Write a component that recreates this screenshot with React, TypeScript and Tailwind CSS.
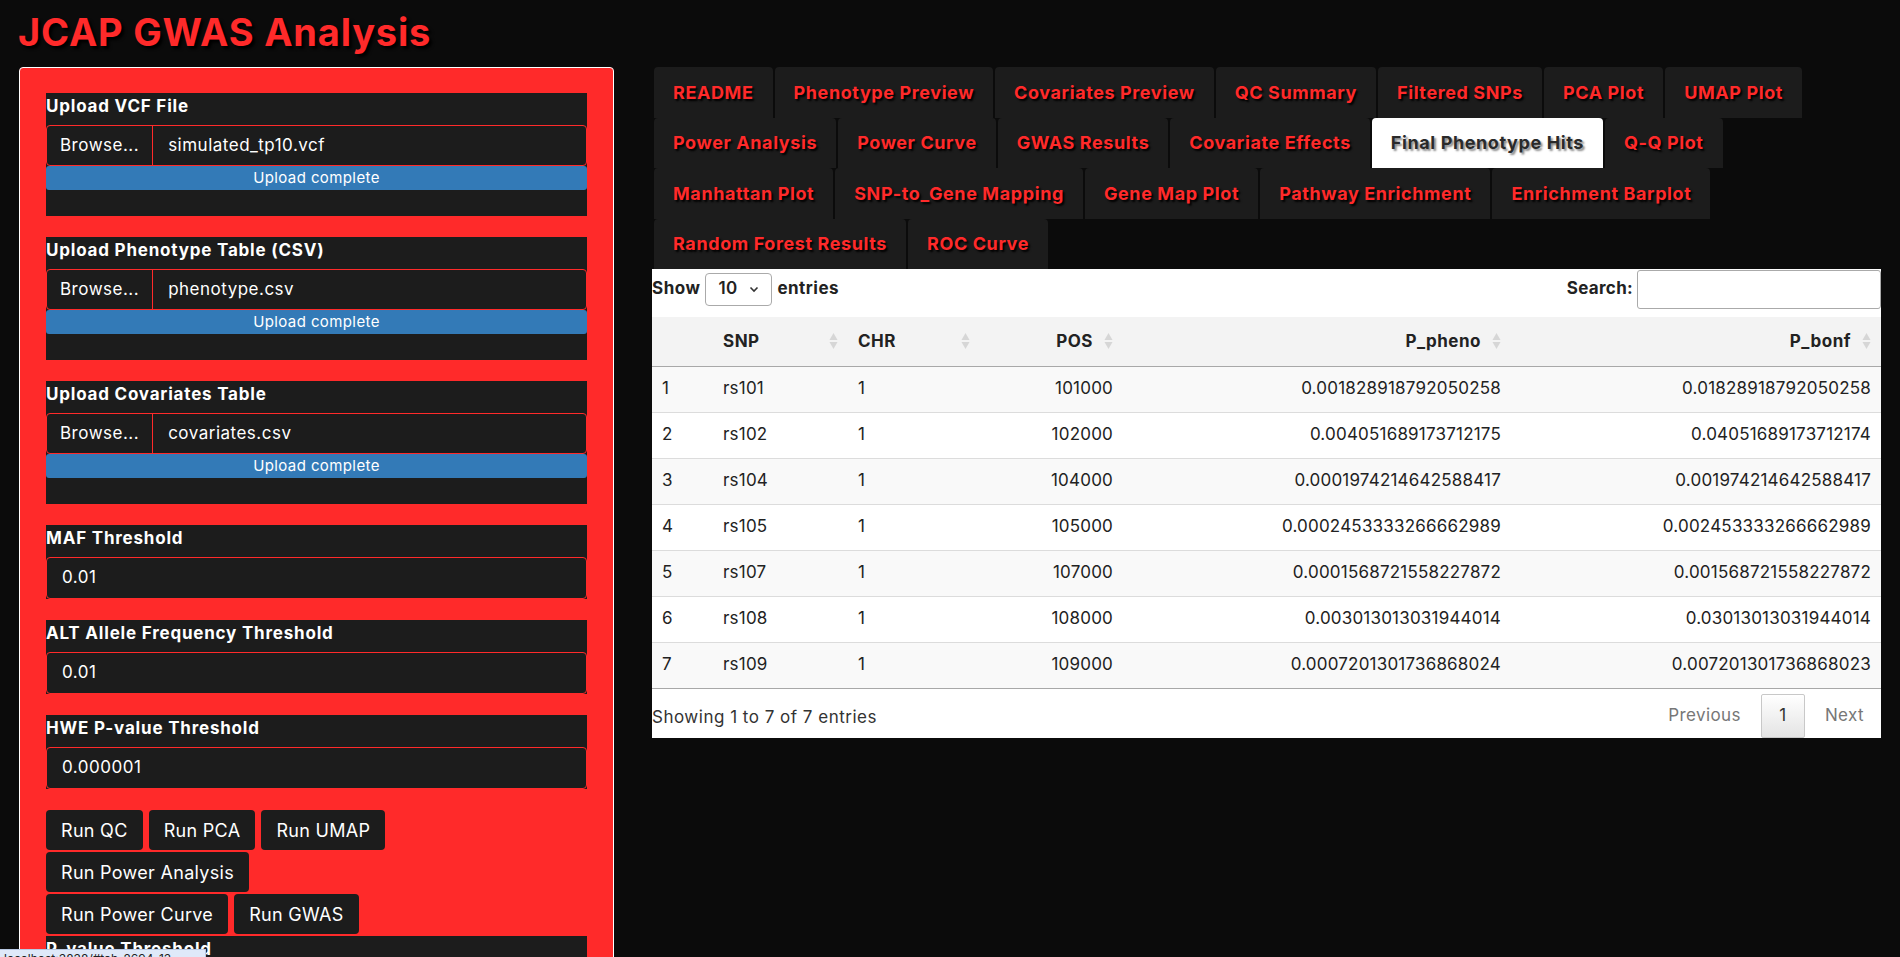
import React from "react";

const tabRows: string[][] = [
  ["README", "Phenotype Preview", "Covariates Preview", "QC Summary", "Filtered SNPs", "PCA Plot", "UMAP Plot"],
  ["Power Analysis", "Power Curve", "GWAS Results", "Covariate Effects", "Final Phenotype Hits", "Q-Q Plot"],
  ["Manhattan Plot", "SNP-to_Gene Mapping", "Gene Map Plot", "Pathway Enrichment", "Enrichment Barplot"],
  ["Random Forest Results", "ROC Curve"],
];

const ACTIVE = "Final Phenotype Hits";

const hits = [
  ["1", "rs101", "1", "101000", "0.001828918792050258", "0.01828918792050258"],
  ["2", "rs102", "1", "102000", "0.004051689173712175", "0.04051689173712174"],
  ["3", "rs104", "1", "104000", "0.0001974214642588417", "0.001974214642588417"],
  ["4", "rs105", "1", "105000", "0.0002453333266662989", "0.002453333266662989"],
  ["5", "rs107", "1", "107000", "0.0001568721558227872", "0.001568721558227872"],
  ["6", "rs108", "1", "108000", "0.003013013031944014", "0.03013013031944014"],
  ["7", "rs109", "1", "109000", "0.0007201301736868024", "0.007201301736868023"],
];

// Shiny-style file upload block
function FileInput({ label, file }: { label: string; file: string }) {
  return (
    <div className="bg-[#1c1c1c] pb-[26px] mb-[21px]">
      <div className="h-[32px] pt-[2px] leading-[22px] text-[17px] tracking-[0.8px] font-bold text-white">{label}</div>
      <div className="flex h-[41px] border border-[#ff2a2a] rounded-[4px] text-[17px] tracking-[0.5px] text-white">
        <div className="flex items-center px-[13px] border-r border-[#ff2a2a]">Browse...</div>
        <div className="flex items-center px-[15px]">{file}</div>
      </div>
      <div className="h-[24px] bg-[#337ab7] rounded-[3px] text-center text-[15px] tracking-[0.4px] leading-[24px] text-white">
        Upload complete
      </div>
    </div>
  );
}

function NumInput({ label, value }: { label: string; value: string }) {
  return (
    <div className="bg-[#1c1c1c] mb-[21px]">
      <div className="h-[32px] pt-[2px] leading-[22px] text-[17px] tracking-[0.8px] font-bold text-white">{label}</div>
      <div className="flex items-center h-[42px] px-[15px] border border-[#ff2a2a] rounded-[4px] text-[17px] tracking-[0.5px] text-white">
        {value}
      </div>
    </div>
  );
}

function RunButton({ children }: { children: React.ReactNode }) {
  return (
    <div className="h-[40px] px-[15px] flex items-center bg-[#1c1c1c] rounded-[4px] text-[18px] tracking-[0.3px] text-white">
      {children}
    </div>
  );
}

function SortIcon() {
  return (
    <svg width="9" height="18" viewBox="0 0 9 18" className="absolute right-[10px] top-1/2 -translate-y-1/2">
      <polygon points="4.5,1 8.5,8 0.5,8" fill="#d6d6d6" />
      <polygon points="0.5,10 8.5,10 4.5,17" fill="#d6d6d6" />
    </svg>
  );
}

function Sidebar() {
  return (
    <div className="w-[595px] shrink-0 bg-[#ff2a2a] border border-white rounded-[4px] px-[26px] pt-[25px] pb-[40px]">
      <FileInput label="Upload VCF File" file="simulated_tp10.vcf" />
      <FileInput label="Upload Phenotype Table (CSV)" file="phenotype.csv" />
      <FileInput label="Upload Covariates Table" file="covariates.csv" />
      <NumInput label="MAF Threshold" value="0.01" />
      <NumInput label="ALT Allele Frequency Threshold" value="0.01" />
      <NumInput label="HWE P-value Threshold" value="0.000001" />
      <div className="flex flex-col gap-[2px]">
        <div className="flex gap-[6px]">
          <RunButton>Run QC</RunButton>
          <RunButton>Run PCA</RunButton>
          <RunButton>Run UMAP</RunButton>
        </div>
        <div className="flex gap-[6px]">
          <RunButton>Run Power Analysis</RunButton>
        </div>
        <div className="flex gap-[6px]">
          <RunButton>Run Power Curve</RunButton>
          <RunButton>Run GWAS</RunButton>
        </div>
      </div>
      <div className="mt-[2px]">
        <NumInput label="P-value Threshold" value="0.00000005" />
      </div>
    </div>
  );
}

function Tabs() {
  return (
    <div className="flex flex-col pl-[2px]">
      {tabRows.map((row, i) => (
        <div key={i} className="flex gap-[2px] h-[50.5px]">
          {row.map((t) => {
            const active = t === ACTIVE;
            return (
              <div
                key={t}
                className={
                  active
                    ? "flex items-center px-[19px] rounded-t-[4px] bg-white text-[18px] tracking-[0.6px] font-bold text-[#2a2a2a] [text-shadow:2px_2px_2px_#8a8a8a]"
                    : "flex items-center px-[19px] rounded-t-[4px] bg-[#1c1c1c] text-[18px] tracking-[0.6px] font-bold text-[#ff2a2a] [text-shadow:2px_2px_2px_#000]"
                }
              >
                {t}
              </div>
            );
          })}
        </div>
      ))}
    </div>
  );
}

function HitsTable() {
  const heads = [
    { t: "", w: "w-[61px]", right: false, sort: false },
    { t: "SNP", w: "w-[135px]", right: false, sort: true },
    { t: "CHR", w: "w-[132px]", right: false, sort: true },
    { t: "POS", w: "w-[143px]", right: true, sort: true },
    { t: "P_pheno", w: "w-[388px]", right: true, sort: true },
    { t: "P_bonf", w: "w-[370px]", right: true, sort: true },
  ];
  return (
    <div className="bg-white text-[#222]">
      <div className="flex items-center justify-between h-[40px]">
        <div className="flex items-center gap-[5px] text-[17px] tracking-[0.5px] font-bold">
          <span>Show</span>
          <div className="flex items-center justify-between w-[67px] h-[33px] px-[12px] border border-[#aaa] rounded-[4px] font-semibold">
            <span>10</span>
            <svg width="10" height="7" viewBox="0 0 10 7">
              <path d="M1.5 1.5 L5 5 L8.5 1.5" fill="none" stroke="#333" strokeWidth="1.6" />
            </svg>
          </div>
          <span>entries</span>
        </div>
        <div className="flex items-center gap-[4px] text-[17px] tracking-[0.3px] font-bold">
          <span>Search:</span>
          <div className="w-[244px] h-[39px] border border-[#aaa] rounded-[3px]" />
        </div>
      </div>
      <table className="w-full border-collapse table-fixed mt-[8px] text-[17px] tracking-[0.2px]">
        <thead>
          <tr className="h-[49px] bg-[#f3f3f3] border-b border-[#a8a8a8]">
            {heads.map((h, i) => (
              <th
                key={i}
                className={`relative ${h.w} pl-[10px] pr-[30px] font-bold tracking-[0.5px] ${h.right ? "text-right" : "text-left"}`}
              >
                {h.t}
                {h.sort && <SortIcon />}
              </th>
            ))}
          </tr>
        </thead>
        <tbody>
          {hits.map((r, i) => (
            <tr key={i} className={`h-[46px] border-b ${i === hits.length - 1 ? "border-[#a8a8a8]" : "border-[#dcdcdc]"} ${i % 2 === 0 ? "bg-[#f9f9f9]" : "bg-white"}`}>
              {r.map((c, j) => (
                <td key={j} className={`px-[10px] ${j >= 3 ? "text-right" : "text-left"}`}>
                  {c}
                </td>
              ))}
            </tr>
          ))}
        </tbody>
      </table>
      <div className="flex items-start justify-between h-[49px]">
        <div className="pt-[16px] text-[17px] tracking-[0.5px] text-[#333]">Showing 1 to 7 of 7 entries</div>
        <div className="flex items-center pt-[5px] pr-[17px] text-[17px] tracking-[0.4px] text-[#777]">
          <span className="px-[12px]">Previous</span>
          <span className="mx-[8px] w-[44px] h-[44px] flex items-center justify-center border border-[#c8c8c8] rounded-[2px] text-[#333] bg-gradient-to-b from-white to-[#e4e4e4]">
            1
          </span>
          <span className="pl-[12px]">Next</span>
        </div>
      </div>
    </div>
  );
}

export default function App() {
  return (
    <div className="h-screen overflow-hidden bg-[#0b0b0b] font-['Inter','Liberation_Sans',sans-serif]">
      <h2 className="pl-[18px] pt-[10px] h-[67px] text-[38px] tracking-[0.8px] leading-[44px] font-bold text-[#ff2a2a] [text-shadow:3px_3px_3px_#000]">
        JCAP GWAS Analysis
      </h2>
      <div className="flex pl-[19px] pr-[19px] gap-[38px]">
        <Sidebar />
        <div className="flex-1 min-w-0">
          <Tabs />
          <HitsTable />
        </div>
      </div>
      <div className="fixed left-0 bottom-0 w-[206px] h-[8px] overflow-hidden bg-[#dfe9f9] border-t border-r border-[#b9c9e3]">
        <div className="mt-[1px] pl-[4px] text-[12px] leading-[16px] text-[#222] whitespace-nowrap">
          localhost:3838/#tab-2694-13
        </div>
      </div>
    </div>
  );
}
